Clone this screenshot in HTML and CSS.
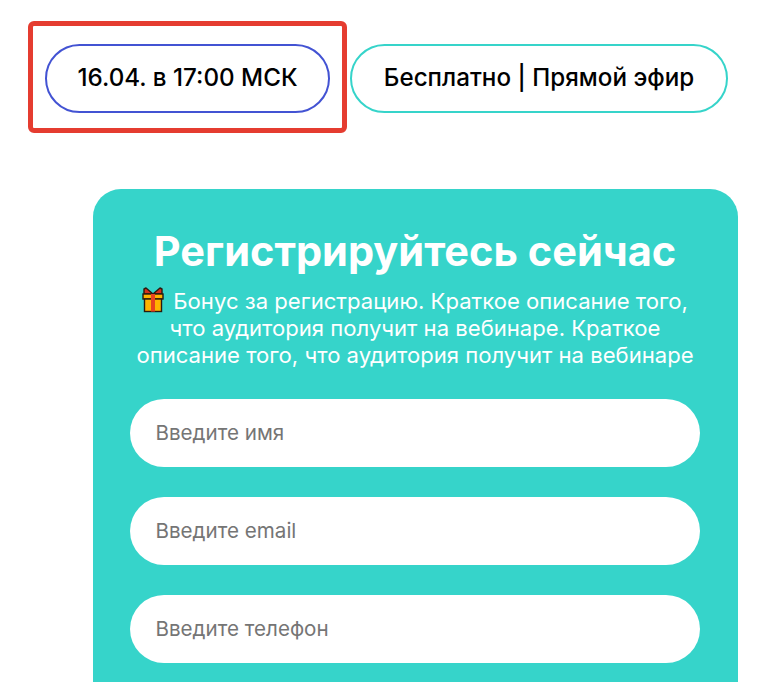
FILE: index.html
```html
<!DOCTYPE html>
<html lang="ru">
<head>
  <meta charset="UTF-8" />
  <meta name="viewport" content="width=device-width, initial-scale=1.0"/>
  <title>Регистрация на вебинар</title>
  <link rel="stylesheet" href="styles.css">
</head>
<body>

  <div class="badges">
    <div class="badge-mark">
      <div class="badge badge-date">16.04. в 17:00 МСК</div>
    </div>
    <div class="badge badge-free">Бесплатно | Прямой эфир</div>
  </div>

  <section class="form-card">
    <h1>Регистрируйтесь сейчас</h1>
    <p class="form-text">
      <svg class="gift" viewBox="0 0 22 26" aria-hidden="true">
        <path d="M11 7 L4 1 L2 2 L2 7 Z M11 7 L18 1 L20 2 L20 7 Z" fill="#d8301c" stroke="#2a1a10" stroke-width="1.4" stroke-linejoin="round"/>
        <rect x="1" y="7" width="20" height="5" fill="#ffb300" stroke="#2a1a10" stroke-width="1.4"/>
        <rect x="2.5" y="12" width="17" height="12.5" fill="#ffb300" stroke="#2a1a10" stroke-width="1.4"/>
        <rect x="9" y="7" width="4" height="17.5" fill="#e8431f"/>
      </svg>
      Бонус за регистрацию. Краткое описание того,<br>
      что аудитория получит на вебинаре. Краткое<br>
      описание того, что аудитория получит на вебинаре
    </p>
    <form class="form-fields">
      <input type="text" placeholder="Введите имя">
      <input type="email" placeholder="Введите email">
      <input type="tel" placeholder="Введите телефон">
    </form>
  </section>

</body>
</html>
```
FILE: styles.css
```css
html, body {
  height: 682px;
  overflow: hidden;
}

body {
  margin: 0;
  padding: 21px 0 0 28px;
  box-sizing: border-box;
  font-family: 'Inter', 'Roboto', sans-serif;
  background-color: #fff;
  color: #000;
}

.badges {
  display: flex;
  align-items: flex-start;
  gap: 3px;
}

.badge-mark {
  border: 5px solid #e53c30;
  border-radius: 6px;
  padding: 18px 12px 15px;
}

.badge {
  height: 69px;
  box-sizing: border-box;
  display: flex;
  align-items: center;
  justify-content: center;
  padding-bottom: 2px;
  border-radius: 35px;
  border: 2px solid;
  font-size: 24.2px;
  font-weight: 500;
  white-space: nowrap;
}

.badge-date {
  width: 285px;
  border-color: #4353d3;
}

.badge-free {
  width: 378px;
  margin-top: 23px;
  border-color: #36d4ca;
}

.form-card {
  margin: 56px 0 0 65px;
  width: 645px;
  box-sizing: border-box;
  padding: 37px 38px 60px 37px;
  background-color: #36d4ca;
  border-radius: 28px;
  color: #fff;
  text-align: center;
}

.form-card h1 {
  margin: 0;
  font-size: 41.5px;
  line-height: 50px;
  font-weight: 700;
}

.form-text {
  margin: 11px 0 30px;
  font-size: 22.1px;
  line-height: 27px;
}

.gift {
  width: 22px;
  height: 26px;
  vertical-align: -4px;
  margin-right: 3px;
}

.form-fields {
  display: flex;
  flex-direction: column;
  gap: 30px;
}

.form-fields input {
  height: 68px;
  box-sizing: border-box;
  border: none;
  border-radius: 34px;
  padding: 0 26px 2px 25.5px;
  font-family: inherit;
  font-size: 20.6px;
  background-color: #fff;
}

.form-fields input::placeholder {
  color: #757575;
  opacity: 1;
}
```
